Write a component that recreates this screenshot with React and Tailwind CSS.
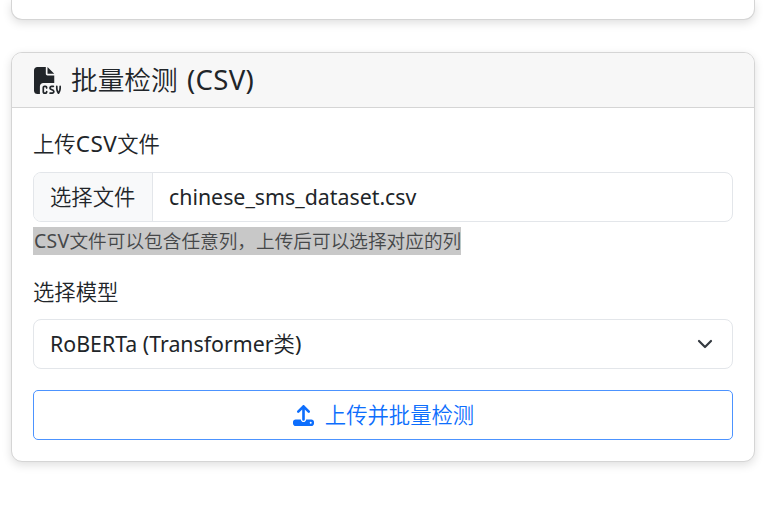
import { FaFileCsv, FaUpload } from "react-icons/fa6";

function Latin({ className = "", children }) {
  return <span className={`font-normal whitespace-pre ${className}`}>{children}</span>;
}

export default function App() {
  return (
    <div className="h-[528px] w-[764px] overflow-hidden bg-white pr-[9px] pl-[11px] font-['Noto_Sans','Noto_Sans_CJK_SC',sans-serif] text-[21.33px] leading-8 font-[350] whitespace-nowrap text-[#212529]">
      <div className="h-5 rounded-b-[11px] border border-t-0 border-[#d5d5d5] bg-white shadow-[0_3px_10px_rgba(0,0,0,0.13)]" />

      <section className="mt-8 h-[410px] rounded-[11px] border border-[#d5d5d5] bg-white shadow-[0_3px_10px_rgba(0,0,0,0.13)]">
        <header className="flex h-[55px] items-center rounded-t-[10px] border-b border-[#d5d5d5] bg-[#f7f7f7] pl-[22px]">
          <FaFileCsv className="size-[27px] shrink-0" />
          <h5 className="ml-[10px] flex items-center text-[26.67px]">
            批量检测<Latin className="ml-0.5 text-[27.5px] tracking-[0.3px]"> (CSV)</Latin>
          </h5>
        </header>

        <div className="px-[21px] pt-5">
          <label className="flex h-8 items-center">
            上传<Latin className="text-[22.5px] tracking-[0.5px]">CSV</Latin>文件
          </label>
          <div className="mt-3 flex h-[50px] overflow-hidden rounded-[8px] border border-[#e3e6ea]">
            <div className="flex w-[119px] items-center border-r border-[#e3e6ea] bg-[#f8f9fa] pl-4">选择文件</div>
            <div className="flex items-center pl-4">
              <Latin>chinese_sms_dataset.csv</Latin>
            </div>
          </div>
          <div className="mt-[5px] flex h-7 w-[428px] items-center bg-[#c8c8c8] pl-px text-[18.67px] text-[#454749]">
            <Latin className="text-[19.4px] tracking-[0.3px]">CSV</Latin>文件可以包含任意列，上传后可以选择对应的列
          </div>

          <label className="mt-[21px] flex h-8 items-center">选择模型</label>
          <div className="mt-[11px] flex h-[50px] items-center justify-between rounded-[8px] border border-[#e3e6ea] pr-[19px] pl-4">
            <div className="flex items-center">
              <Latin>RoBERTa (Transformer</Latin>类<Latin>)</Latin>
            </div>
            <svg viewBox="0 0 16 16" className="size-4" fill="none" stroke="#343a40" strokeWidth="2.2" strokeLinecap="round" strokeLinejoin="round">
              <path d="m2 5 6 6 6-6" />
            </svg>
          </div>

          <button className="mt-[21px] flex h-[50px] w-full items-center justify-center rounded-[5px] border border-[#4c93ff] pl-px text-[#0d6efd]">
            <FaUpload className="size-[21px]" />
            <span className="ml-[11px]">上传并批量检测</span>
          </button>
        </div>
      </section>
    </div>
  );
}
